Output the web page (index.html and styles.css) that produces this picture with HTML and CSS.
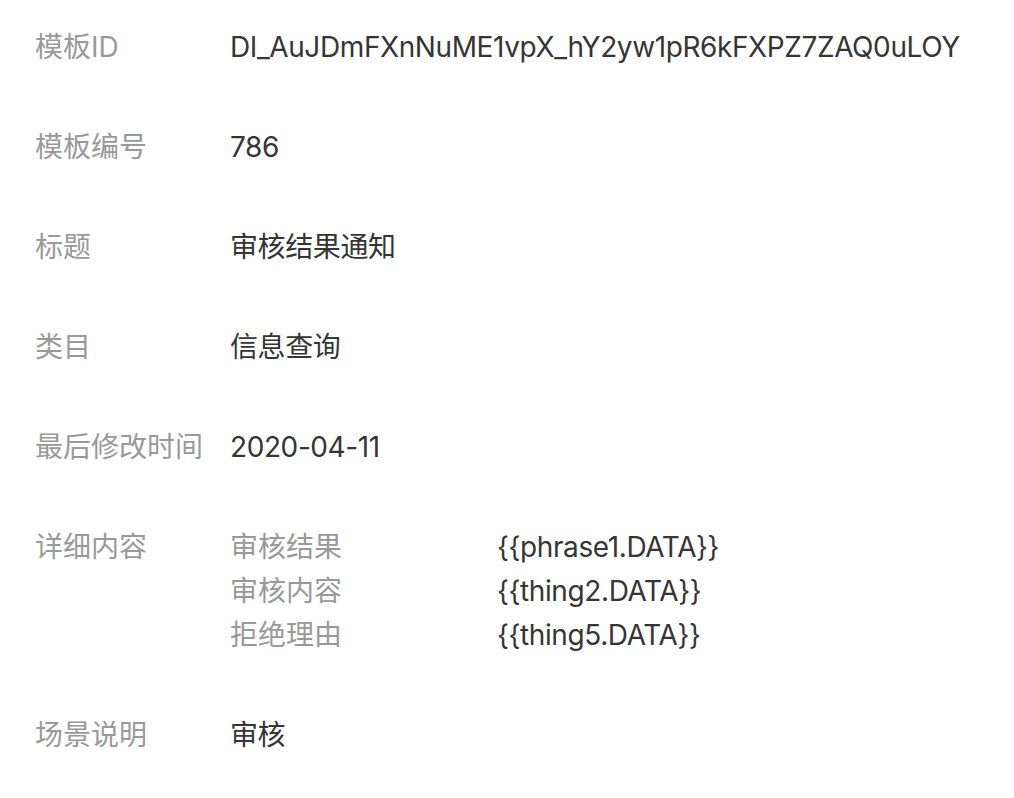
FILE: index.html
```html
<!DOCTYPE html>
<html lang="zh-CN">
<head>
<meta charset="utf-8">
<link rel="stylesheet" href="styles.css">
</head>
<body>
<div class="info">
  <div class="row"><div class="label">模板ID</div><div class="value">DI_AuJDmFXnNuME1vpX_hY2yw1pR6kFXPZ7ZAQ0uLOY</div></div>
  <div class="row"><div class="label">模板编号</div><div class="value">786</div></div>
  <div class="row"><div class="label">标题</div><div class="value">审核结果通知</div></div>
  <div class="row"><div class="label">类目</div><div class="value">信息查询</div></div>
  <div class="row"><div class="label">最后修改时间</div><div class="value">2020-04-11</div></div>
  <div class="row"><div class="label">详细内容</div>
    <div class="value detail">
      <div class="sub-label">审核结果</div><div class="sub-value">{{phrase1.DATA}}</div>
      <div class="sub-label">审核内容</div><div class="sub-value">{{thing2.DATA}}</div>
      <div class="sub-label">拒绝理由</div><div class="sub-value">{{thing5.DATA}}</div>
    </div>
  </div>
  <div class="row"><div class="label">场景说明</div><div class="value">审核</div></div>
</div>
</body>
</html>
```
FILE: styles.css
```css
html, body { margin: 0; padding: 0; background: #fff; }
body {
  font-family: Inter, "Noto Sans CJK SC", sans-serif;
  font-size: 28px;
  line-height: 44px;
  color: #353535;
}
.info {
  padding: 25px 0 0 35px;
  display: flex;
  flex-direction: column;
  gap: 56px;
}
.row { display: flex; }
.label { width: 195px; flex-shrink: 0; color: #999; }
.value { color: #353535; white-space: nowrap; letter-spacing: -0.4px; }
.detail {
  display: grid;
  grid-template-columns: 267px auto;
}
.sub-label { color: #999; letter-spacing: 0; }
.sub-value { color: #353535; }
```
